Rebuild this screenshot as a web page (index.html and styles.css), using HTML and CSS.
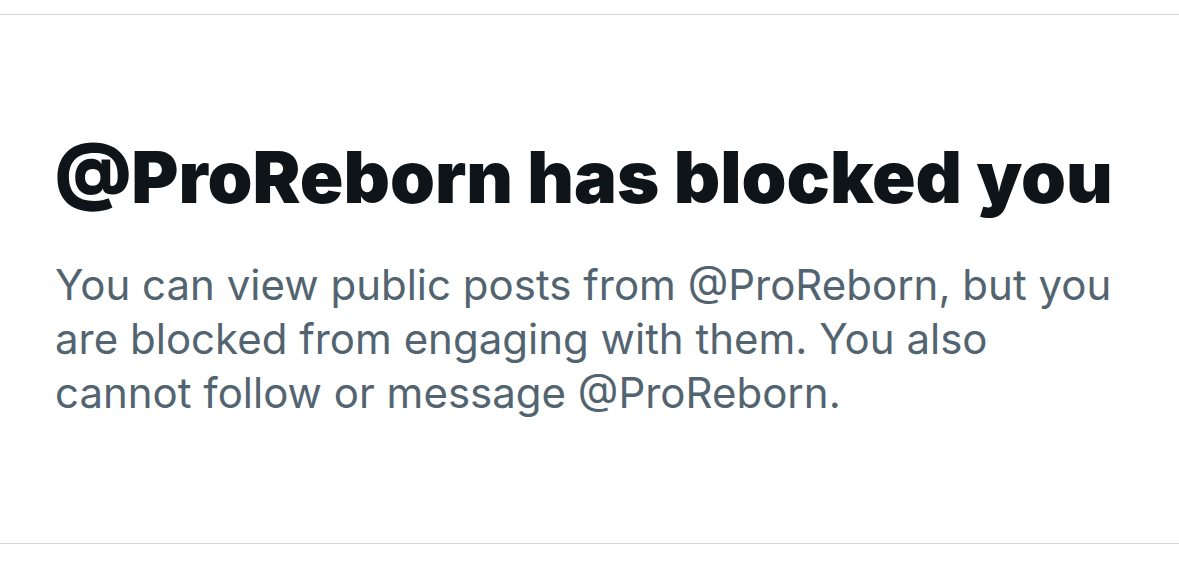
FILE: index.html
```html
<!DOCTYPE html>
<html lang="en">
<head>
<meta charset="utf-8">
<link rel="stylesheet" href="styles.css">
</head>
<body>
<div class="page">
  <div class="divider"></div>
  <section class="blocked">
    <h1 class="title">@ProReborn has blocked you</h1>
    <p class="desc">You can view public posts from @ProReborn, but you are blocked from engaging with them. You also cannot follow or message @ProReborn.</p>
  </section>
  <div class="divider"></div>
</div>
</body>
</html>
```
FILE: styles.css
```css
html, body {
  margin: 0;
  padding: 0;
  background: #ffffff;
}
.page {
  width: 1179px;
  height: 570px;
  padding-top: 14px;
  box-sizing: border-box;
  display: flex;
  flex-direction: column;
}
.divider {
  height: 1px;
  background: #d6d6d6;
}
.blocked {
  height: 528px;
  box-sizing: border-box;
  padding: 122px 40px 0 55px;
}
.title {
  margin: 0;
  font-family: Inter, "Liberation Sans", sans-serif;
  font-weight: 900;
  font-size: 72px;
  line-height: 80px;
  letter-spacing: 0;
  color: #0f1419;
  white-space: nowrap;
}
.desc {
  margin: 41px 0 0;
  font-family: Inter, "Liberation Sans", sans-serif;
  font-weight: 400;
  font-size: 42px;
  line-height: 54px;
  letter-spacing: 0;
  color: #536471;
  max-width: 1080px;
}
```
